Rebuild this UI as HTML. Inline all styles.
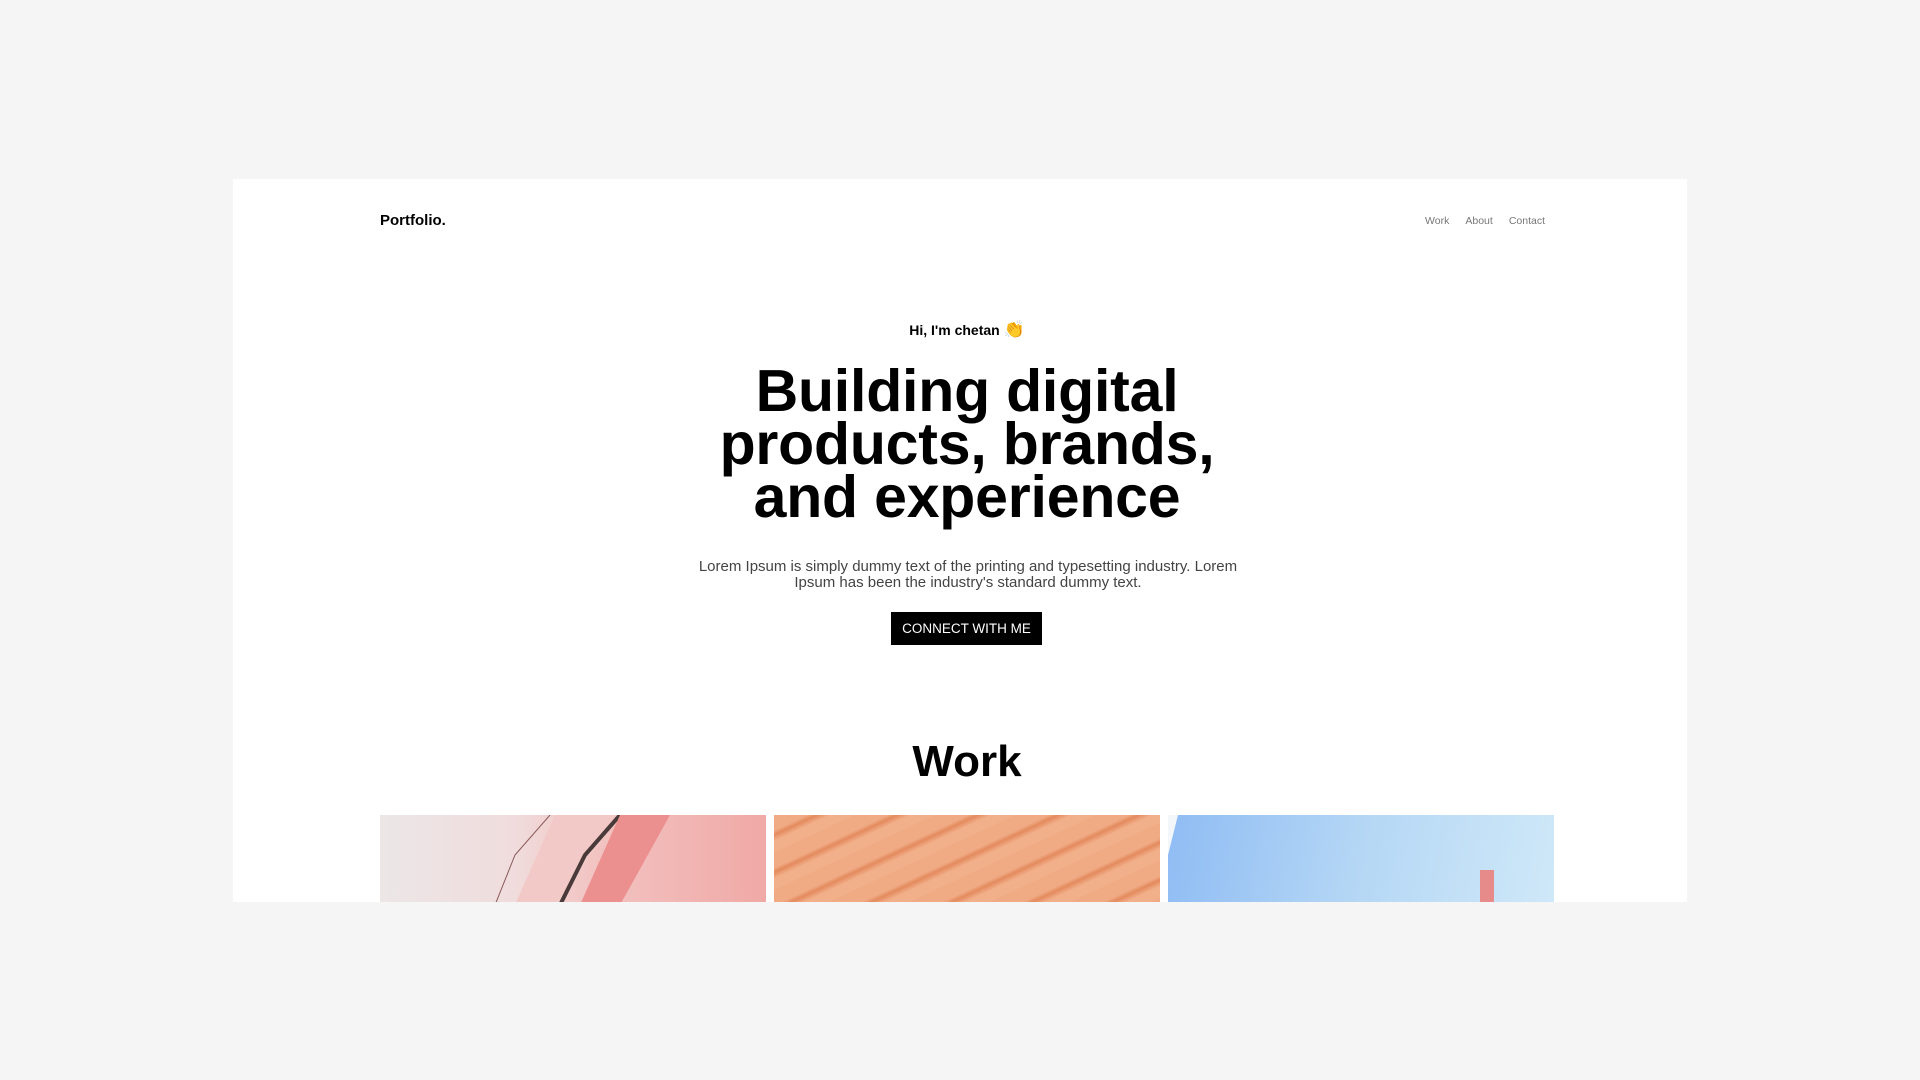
<!DOCTYPE html>
<html><head><meta charset="utf-8"><style>
*{margin:0;padding:0;box-sizing:border-box}
html,body{width:1920px;height:1080px;background:#f5f5f5;overflow:hidden;font-family:"Liberation Sans",Arial,sans-serif;color:#000}
.card{position:absolute;left:233px;top:179px;width:1454px;height:723px;background:#fff;overflow:hidden}
.logo{position:absolute;left:147px;top:33px;font-size:15px;font-weight:bold}
.nav{position:absolute;right:142px;top:36px;font-size:10.5px;color:#777}
.nav span{margin-left:16px}
.hi{position:absolute;left:14px;right:0;top:141px;text-align:center;font-size:14px;font-weight:bold}
.hi span{font-size:17px}
h1{position:absolute;left:14px;right:0;top:186px;text-align:center;font-size:59px;line-height:53px;font-weight:bold;letter-spacing:-0.2px}
p{position:absolute;left:449px;width:572px;top:380px;text-align:center;font-size:15px;line-height:16px;color:#444}
.btn{position:absolute;left:658px;top:433px;width:151px;height:33px;background:#000;color:#fff;font-size:13.5px;line-height:33px;text-align:center}
h2{position:absolute;left:14px;right:0;top:558px;text-align:center;font-size:44px;font-weight:bold;line-height:50px}
.img{position:absolute;top:636px;height:90px}
.i1{left:147px;width:386px;background:linear-gradient(90deg,#ece6e7 0%,#f0dcdc 35%,#f2c4c2 55%,#f0a9a6 100%)}
.i2{left:541px;width:386px;background:repeating-linear-gradient(155deg,#f0aa84 0 14px,#e48a5e 18px,#f2b08a 24px 34px);}
.i3{left:935px;width:386px;background:linear-gradient(100deg,#8fbcf4 0%,#b5d7f5 50%,#cfe8f8 100%)}
</style></head><body>
<div class="card">
<div class="logo">Portfolio.</div>
<div class="nav"><span>Work</span><span>About</span><span>Contact</span></div>
<div class="hi">Hi, I'm chetan <span style="font-family:'DejaVu Sans',sans-serif;color:#e9a800">👏</span></div>
<h1>Building digital<br>products, brands,<br>and experience</h1>
<p>Lorem Ipsum is simply dummy text of the printing and typesetting industry. Lorem Ipsum has been the industry's standard dummy text.</p>
<div class="btn">CONNECT WITH ME</div>
<h2>Work</h2>
<div class="img i1"><svg width="386" height="90"><polygon points="175,0 240,0 175,90 135,90" fill="#f2c9c6"/><polyline points="170,0 135,40 115,90" stroke="#8a5a5a" fill="none"/><polyline points="240,0 205,40 180,90" stroke="#4a3a3a" stroke-width="4" fill="none"/><polygon points="240,0 290,0 240,90 200,90" fill="#ec8f8f"/></svg></div>
<div class="img i2"></div>
<div class="img i3"><svg width="386" height="90"><polygon points="0,0 10,0 0,40" fill="#f4f7fa"/><rect x="312" y="55" width="14" height="35" fill="#e68a8a"/></svg></div>
</div>
</body></html>
